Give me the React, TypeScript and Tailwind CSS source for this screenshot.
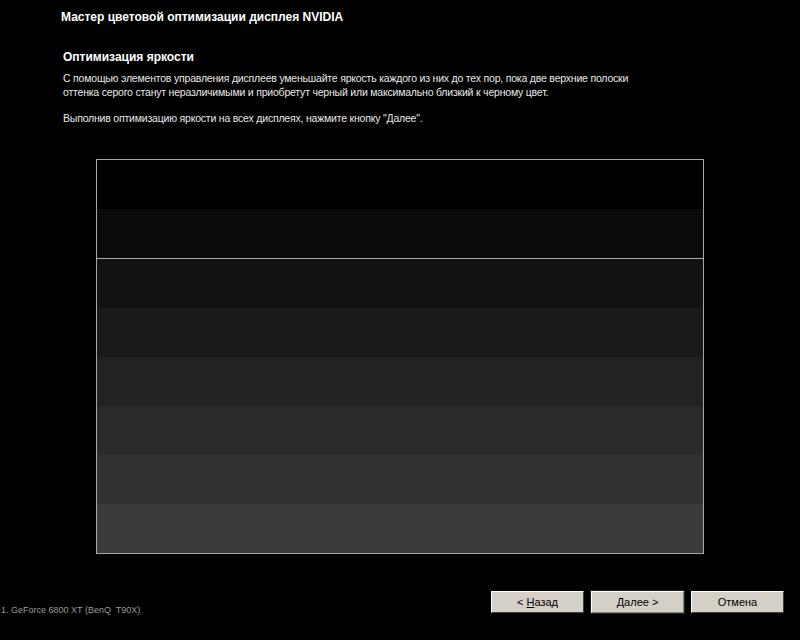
import React from 'react';

const bands = ['bg-[#000000]', 'bg-[#0b0b0b]', 'bg-[#121212]', 'bg-[#1a1a1a]', 'bg-[#222222]', 'bg-[#2a2a2a]', 'bg-[#323232]', 'bg-[#3a3a3a]'];

const WizButton: React.FC<{ label: React.ReactNode; isDefault?: boolean }> = ({ label, isDefault }) => (
  <button
    className={
      'w-[93px] h-[22px] bg-[#d4d0c8] text-[11px] text-black flex items-center justify-center ' +
      (isDefault
        ? 'outline outline-1 outline-[#222] border border-t-[#fff] border-l-[#fff] border-r-[#808080] border-b-[#808080]'
        : 'border border-t-[#fff] border-l-[#fff] border-r-[#404040] border-b-[#404040]')
    }
  >
    {label}
  </button>
);

export default function App() {
  return (
    <div className="w-[800px] h-[640px] bg-black text-white relative overflow-hidden" style={{ fontFamily: '"Liberation Sans", Arial, sans-serif' }}>
      <div className="pl-[61px] pt-[9px] text-[12px] font-bold leading-[16px] whitespace-nowrap">Мастер цветовой оптимизации дисплея NVIDIA</div>

      <div className="pl-[63px] pt-[24px]">
        <div className="text-[12px] font-bold leading-[16px]">Оптимизация яркости</div>
        <p className="mt-[6px] text-[10.5px] leading-[14px] text-[#e8e8e8] whitespace-nowrap tracking-[-0.2px]">
          С помощью элементов управления дисплеев уменьшайте яркость каждого из них до тех пор, пока две верхние полоски
          <br />
          оттенка серого станут неразличимыми и приобретут черный или максимально близкий к черному цвет.
        </p>
        <p className="mt-[12px] text-[10.5px] leading-[14px] text-[#e8e8e8] tracking-[-0.2px]">
          Выполнив оптимизацию яркости на всех дисплеях, нажмите кнопку "Далее".
        </p>
      </div>

      <div className="ml-[96px] mt-[34px] w-[608px] border border-[#a8a8a8] flex flex-col">
        <div className={'h-[49px] ' + bands[0]} />
        <div className={'h-[49px] ' + bands[1]} />
        <div className="h-[1px] bg-[#a8a8a8]" />
        {bands.slice(2).map((b, i) => (
          <div key={i} className={'h-[49px] ' + b} />
        ))}
      </div>

      <div className="absolute left-0 right-0 top-[591px] h-[49px] flex items-start">
        <div className="pt-[14px] pl-[1px] text-[9px] leading-[10px] text-[#9a9a9a] flex-1">1. GeForce 6800 XT (BenQ&nbsp; T90X)</div>
        <div className="flex gap-[7px] pr-[16px]">
          <WizButton label={<span>&lt; <u>Н</u>азад</span>} />
          <WizButton label={<span><u>Д</u>алее &gt;</span>} isDefault />
          <WizButton label="Отмена" />
        </div>
      </div>
    </div>
  );
}
